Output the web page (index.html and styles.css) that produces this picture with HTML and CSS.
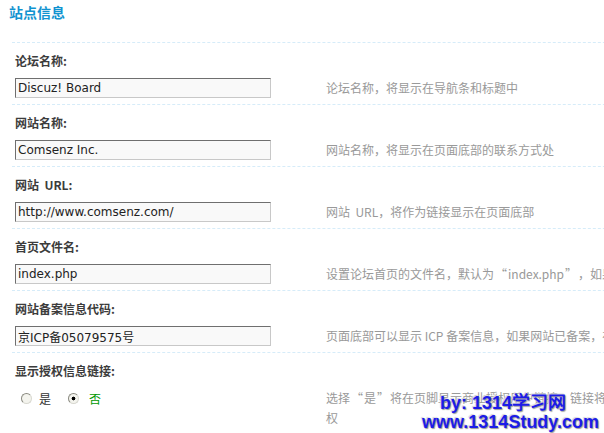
FILE: index.html
```html
<!DOCTYPE html>
<html lang="zh-CN">
<head>
<meta charset="utf-8">
<title>站点信息</title>
<link rel="stylesheet" href="styles.css">
</head>
<body>
<div class="page">
  <h3 class="title">站点信息</h3>
  <div class="settings">
    <div class="row">
      <div class="label">论坛名称:</div>
      <div class="field">
        <div class="ctrl"><input class="txt" type="text" value="Discuz! Board"></div>
        <div class="tips">论坛名称，将显示在导航条和标题中</div>
      </div>
    </div>
    <div class="row">
      <div class="label">网站名称:</div>
      <div class="field">
        <div class="ctrl"><input class="txt" type="text" value="Comsenz Inc."></div>
        <div class="tips">网站名称，将显示在页面底部的联系方式处</div>
      </div>
    </div>
    <div class="row">
      <div class="label">网站&nbsp;&nbsp;URL:</div>
      <div class="field">
        <div class="ctrl"><input class="txt" type="text" value="http://www.comsenz.com/"></div>
        <div class="tips">网站&nbsp;&nbsp;URL，将作为链接显示在页面底部</div>
      </div>
    </div>
    <div class="row">
      <div class="label">首页文件名:</div>
      <div class="field">
        <div class="ctrl"><input class="txt" type="text" value="index.php"></div>
        <div class="tips">设置论坛首页的文件名，默认为<span class="q">“</span>index.php<span class="q">”</span>，如果您更改了此文件名，请在此处填写新的文件名</div>
      </div>
    </div>
    <div class="row">
      <div class="label">网站备案信息代码:</div>
      <div class="field">
        <div class="ctrl"><input class="txt" type="text" value="京ICP备05079575号"></div>
        <div class="tips">页面底部可以显示&nbsp;ICP&nbsp;备案信息，如果网站已备案，在此输入您的授权码，它将显示在页面底部</div>
      </div>
    </div>
    <div class="row last">
      <div class="label">显示授权信息链接:</div>
      <div class="field top">
        <div class="ctrl radios">
          <label class="opt"><input type="radio" name="lic" class="rd"><span>是</span></label>
          <label class="opt on"><input type="radio" name="lic" class="rd" checked><span>否</span></label>
        </div>
        <div class="tips multi">选择<span class="q">“</span>是<span class="q">”</span>将在页脚显示商业授权用户链接，链接将指向&nbsp;Discuz!&nbsp;官方网站，用户可通过此链接验证其所使用的&nbsp;Discuz!&nbsp;是否经过商业授<br>权</div>
      </div>
    </div>
  </div>
  <div class="watermark">
    <div class="wm1">by: 1314学习网</div>
    <div class="wm2">www.1314Study.com</div>
  </div>
</div>
</body>
</html>
```

FILE: styles.css
```css
html, body {
  margin: 0;
  padding: 0;
  background: #fff;
}
body {
  width: 604px;
  height: 433px;
  overflow: hidden;
  font-family: "Noto Sans CJK SC", "DejaVu Sans", sans-serif;
  font-size: 12px;
  color: #333;
}
.page {
  position: relative;
  width: 604px;
  height: 433px;
  overflow: hidden;
}
.title {
  margin: 0;
  padding: 2px 0 0 9px;
  height: 21px;
  line-height: 20px;
  font-size: 14px;
  font-weight: bold;
  color: #1193d0;
}
.settings {
  margin: 19px 0 0 12px;
  width: 1400px;
}
.row {
  border-top: 1px dashed #d6ecf9;
  padding: 9px 0 6px 3px;
}
.label {
  height: 18px;
  line-height: 18px;
  font-weight: bold;
  color: #3c3c3c;
  white-space: nowrap;
}
.field {
  display: flex;
  align-items: center;
  margin-top: 8px;
}
.field.top {
  align-items: flex-start;
}
.ctrl {
  box-sizing: border-box;
  width: 301px;
  flex: none;
}
.txt {
  box-sizing: border-box;
  display: block;
  width: 256px;
  height: 20px;
  margin: 0;
  padding: 0 2px;
  border: 1px solid;
  border-color: #6f6f6f #c8c8c8 #c8c8c8 #6f6f6f;
  background: #f9f9f9;
  font-family: "DejaVu Sans", "Noto Sans CJK SC", sans-serif;
  font-size: 12px;
  color: #222;
  outline: none;
}
.tips {
  padding-left: 10px;
  line-height: 20px;
  color: #999;
  white-space: nowrap;
}
.q {
  display: inline-block;
  width: 14px;
  text-align: center;
}
.radios {
  display: flex;
  align-items: center;
  height: 20px;
  padding-left: 6px;
}
.opt {
  display: flex;
  align-items: center;
  color: #333;
}
.opt + .opt {
  margin-left: 17px;
}
.opt.on {
  color: #090;
}
.opt span {
  margin-left: 7px;
}
.opt.on span {
  margin-left: 10px;
}
.rd {
  appearance: none;
  -webkit-appearance: none;
  box-sizing: border-box;
  width: 11px;
  height: 11px;
  margin: 0;
  border: 1px solid;
  border-color: #8a8a80 #d8d8d0 #d8d8d0 #8a8a80;
  border-radius: 50%;
  background: #f4f4ee;
}
.rd:checked {
  background: radial-gradient(circle, #000 0 1.6px, #f4f4ee 2.2px);
}
.watermark {
  position: absolute;
  left: 422px;
  top: 394px;
  font-family: "Liberation Sans", Arial, sans-serif;
  font-weight: bold;
  font-size: 18px;
  line-height: 19px;
  color: #1c1ce8;
  text-shadow: 1px 1px 1px #9a9a9a, -1px -1px 1px #d8d8d8;
  white-space: nowrap;
}
.wm1 {
  padding-left: 18px;
}
```
